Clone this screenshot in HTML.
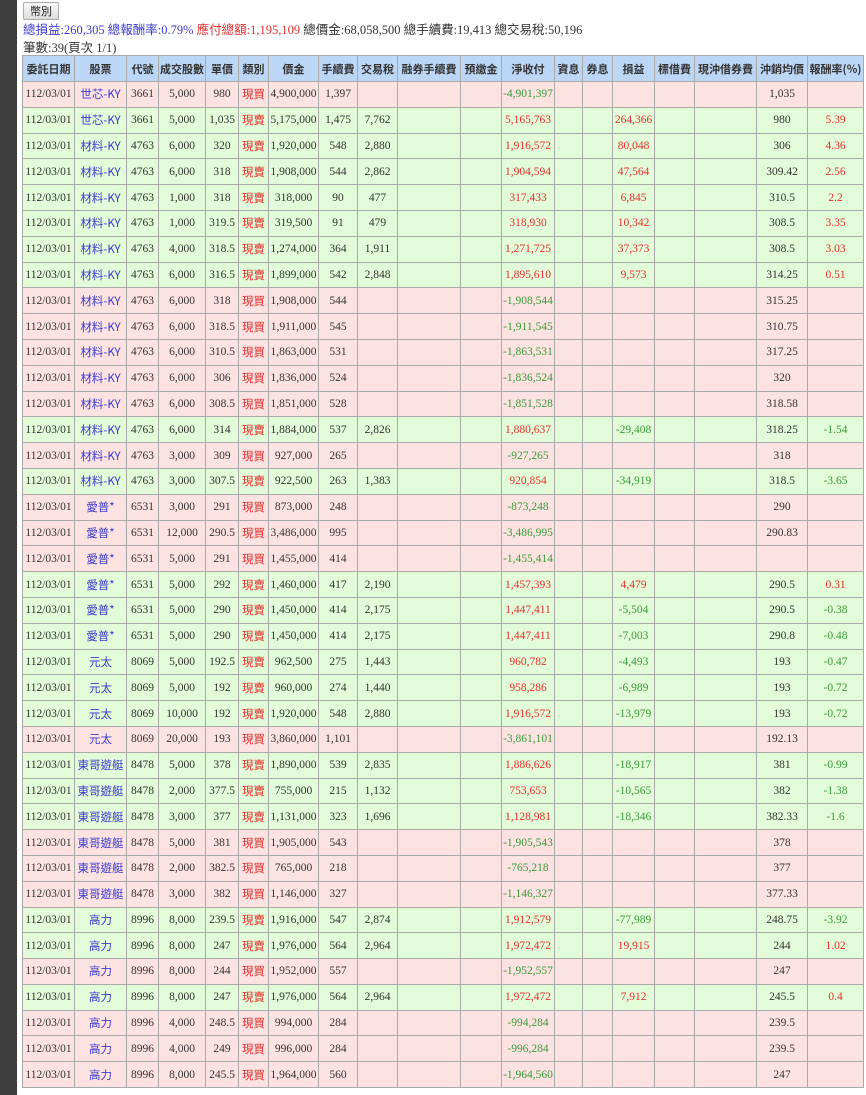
<!DOCTYPE html>
<html><head><meta charset="utf-8"><style>
body{margin:0;width:866px;height:1095px;overflow:hidden;background:#fff;font-family:"Liberation Serif","Noto Sans CJK TC",serif;font-size:12px;color:#333;position:relative}
.strip{position:absolute;left:0;top:0;width:17px;height:1095px;background:#3c3c3c}
.btn{position:absolute;left:23px;top:2px;width:34px;height:16px;border:1px solid #aaa;border-radius:2px;background:linear-gradient(#fafafa,#ddd);font:11px "Noto Sans CJK TC",sans-serif;text-align:center;line-height:16px;color:#222}
.l1{position:absolute;left:23px;top:19px;font-size:12.5px;white-space:nowrap}
.l2{position:absolute;left:23px;top:37px;font-size:12.5px;white-space:nowrap}
.b{color:#3a3ad0}.r{color:#e53030}
table{position:absolute;left:22px;top:55px;border-collapse:collapse;table-layout:fixed;width:841px}
td,th{border:1px solid #a9a9a9;padding:0;text-align:center;white-space:nowrap;overflow:hidden;font-size:11.5px}
th{background:#bcd6f5;height:25px;font:bold 11px "Noto Sans CJK TC",sans-serif;color:#333}
tr.p td{background:#fde2e2}tr.g td{background:#e2fbd8}
tr.p,tr.g{height:25.8px}
td:nth-child(2){color:#3a3ad0;font-family:"Noto Sans CJK TC",sans-serif}
td:nth-child(6){color:#e53030;font-family:"Noto Sans CJK TC",sans-serif}
.n{color:#3a9a3a}.u{color:#e53030}
.bot{position:absolute;left:22px;top:1089px;font:12px "Noto Sans CJK TC",sans-serif;color:#555}
</style></head><body>
<div class="strip"></div>
<div class="btn">幣別</div>
<div class="l1"><span class="b">總損益:260,305 總報酬率:0.79%</span> <span class="r">應付總額:1,195,109</span> 總價金:68,058,500 總手續費:19,413 總交易稅:50,196</div>
<div class="l2">筆數:39(頁次 1/1)</div>
<table>
<colgroup><col style="width:52px"><col style="width:52px"><col style="width:32px"><col style="width:47px"><col style="width:33px"><col style="width:30px"><col style="width:50px"><col style="width:39px"><col style="width:40px"><col style="width:63px"><col style="width:41px"><col style="width:53px"><col style="width:28px"><col style="width:30px"><col style="width:42px"><col style="width:40px"><col style="width:62px"><col style="width:51px"><col style="width:56px"></colgroup>
<tr><th>委託日期</th><th>股票</th><th>代號</th><th>成交股數</th><th>單價</th><th>類別</th><th>價金</th><th>手續費</th><th>交易稅</th><th>融券手續費</th><th>預繳金</th><th>淨收付</th><th>資息</th><th>券息</th><th>損益</th><th>標借費</th><th>現沖借券費</th><th>沖銷均價</th><th>報酬率(%)</th></tr>
<tr class="p"><td>112/03/01</td><td>世芯-KY</td><td>3661</td><td>5,000</td><td>980</td><td>現買</td><td>4,900,000</td><td>1,397</td><td></td><td></td><td></td><td class="n">-4,901,397</td><td></td><td></td><td></td><td></td><td></td><td>1,035</td><td></td></tr>
<tr class="g"><td>112/03/01</td><td>世芯-KY</td><td>3661</td><td>5,000</td><td>1,035</td><td>現賣</td><td>5,175,000</td><td>1,475</td><td>7,762</td><td></td><td></td><td class="u">5,165,763</td><td></td><td></td><td class="u">264,366</td><td></td><td></td><td>980</td><td class="u">5.39</td></tr>
<tr class="g"><td>112/03/01</td><td>材料-KY</td><td>4763</td><td>6,000</td><td>320</td><td>現賣</td><td>1,920,000</td><td>548</td><td>2,880</td><td></td><td></td><td class="u">1,916,572</td><td></td><td></td><td class="u">80,048</td><td></td><td></td><td>306</td><td class="u">4.36</td></tr>
<tr class="g"><td>112/03/01</td><td>材料-KY</td><td>4763</td><td>6,000</td><td>318</td><td>現賣</td><td>1,908,000</td><td>544</td><td>2,862</td><td></td><td></td><td class="u">1,904,594</td><td></td><td></td><td class="u">47,564</td><td></td><td></td><td>309.42</td><td class="u">2.56</td></tr>
<tr class="g"><td>112/03/01</td><td>材料-KY</td><td>4763</td><td>1,000</td><td>318</td><td>現賣</td><td>318,000</td><td>90</td><td>477</td><td></td><td></td><td class="u">317,433</td><td></td><td></td><td class="u">6,845</td><td></td><td></td><td>310.5</td><td class="u">2.2</td></tr>
<tr class="g"><td>112/03/01</td><td>材料-KY</td><td>4763</td><td>1,000</td><td>319.5</td><td>現賣</td><td>319,500</td><td>91</td><td>479</td><td></td><td></td><td class="u">318,930</td><td></td><td></td><td class="u">10,342</td><td></td><td></td><td>308.5</td><td class="u">3.35</td></tr>
<tr class="g"><td>112/03/01</td><td>材料-KY</td><td>4763</td><td>4,000</td><td>318.5</td><td>現賣</td><td>1,274,000</td><td>364</td><td>1,911</td><td></td><td></td><td class="u">1,271,725</td><td></td><td></td><td class="u">37,373</td><td></td><td></td><td>308.5</td><td class="u">3.03</td></tr>
<tr class="g"><td>112/03/01</td><td>材料-KY</td><td>4763</td><td>6,000</td><td>316.5</td><td>現賣</td><td>1,899,000</td><td>542</td><td>2,848</td><td></td><td></td><td class="u">1,895,610</td><td></td><td></td><td class="u">9,573</td><td></td><td></td><td>314.25</td><td class="u">0.51</td></tr>
<tr class="p"><td>112/03/01</td><td>材料-KY</td><td>4763</td><td>6,000</td><td>318</td><td>現買</td><td>1,908,000</td><td>544</td><td></td><td></td><td></td><td class="n">-1,908,544</td><td></td><td></td><td></td><td></td><td></td><td>315.25</td><td></td></tr>
<tr class="p"><td>112/03/01</td><td>材料-KY</td><td>4763</td><td>6,000</td><td>318.5</td><td>現買</td><td>1,911,000</td><td>545</td><td></td><td></td><td></td><td class="n">-1,911,545</td><td></td><td></td><td></td><td></td><td></td><td>310.75</td><td></td></tr>
<tr class="p"><td>112/03/01</td><td>材料-KY</td><td>4763</td><td>6,000</td><td>310.5</td><td>現買</td><td>1,863,000</td><td>531</td><td></td><td></td><td></td><td class="n">-1,863,531</td><td></td><td></td><td></td><td></td><td></td><td>317.25</td><td></td></tr>
<tr class="p"><td>112/03/01</td><td>材料-KY</td><td>4763</td><td>6,000</td><td>306</td><td>現買</td><td>1,836,000</td><td>524</td><td></td><td></td><td></td><td class="n">-1,836,524</td><td></td><td></td><td></td><td></td><td></td><td>320</td><td></td></tr>
<tr class="p"><td>112/03/01</td><td>材料-KY</td><td>4763</td><td>6,000</td><td>308.5</td><td>現買</td><td>1,851,000</td><td>528</td><td></td><td></td><td></td><td class="n">-1,851,528</td><td></td><td></td><td></td><td></td><td></td><td>318.58</td><td></td></tr>
<tr class="g"><td>112/03/01</td><td>材料-KY</td><td>4763</td><td>6,000</td><td>314</td><td>現賣</td><td>1,884,000</td><td>537</td><td>2,826</td><td></td><td></td><td class="u">1,880,637</td><td></td><td></td><td class="n">-29,408</td><td></td><td></td><td>318.25</td><td class="n">-1.54</td></tr>
<tr class="p"><td>112/03/01</td><td>材料-KY</td><td>4763</td><td>3,000</td><td>309</td><td>現買</td><td>927,000</td><td>265</td><td></td><td></td><td></td><td class="n">-927,265</td><td></td><td></td><td></td><td></td><td></td><td>318</td><td></td></tr>
<tr class="g"><td>112/03/01</td><td>材料-KY</td><td>4763</td><td>3,000</td><td>307.5</td><td>現賣</td><td>922,500</td><td>263</td><td>1,383</td><td></td><td></td><td class="u">920,854</td><td></td><td></td><td class="n">-34,919</td><td></td><td></td><td>318.5</td><td class="n">-3.65</td></tr>
<tr class="p"><td>112/03/01</td><td>愛普*</td><td>6531</td><td>3,000</td><td>291</td><td>現買</td><td>873,000</td><td>248</td><td></td><td></td><td></td><td class="n">-873,248</td><td></td><td></td><td></td><td></td><td></td><td>290</td><td></td></tr>
<tr class="p"><td>112/03/01</td><td>愛普*</td><td>6531</td><td>12,000</td><td>290.5</td><td>現買</td><td>3,486,000</td><td>995</td><td></td><td></td><td></td><td class="n">-3,486,995</td><td></td><td></td><td></td><td></td><td></td><td>290.83</td><td></td></tr>
<tr class="p"><td>112/03/01</td><td>愛普*</td><td>6531</td><td>5,000</td><td>291</td><td>現買</td><td>1,455,000</td><td>414</td><td></td><td></td><td></td><td class="n">-1,455,414</td><td></td><td></td><td></td><td></td><td></td><td></td><td></td></tr>
<tr class="g"><td>112/03/01</td><td>愛普*</td><td>6531</td><td>5,000</td><td>292</td><td>現賣</td><td>1,460,000</td><td>417</td><td>2,190</td><td></td><td></td><td class="u">1,457,393</td><td></td><td></td><td class="u">4,479</td><td></td><td></td><td>290.5</td><td class="u">0.31</td></tr>
<tr class="g"><td>112/03/01</td><td>愛普*</td><td>6531</td><td>5,000</td><td>290</td><td>現賣</td><td>1,450,000</td><td>414</td><td>2,175</td><td></td><td></td><td class="u">1,447,411</td><td></td><td></td><td class="n">-5,504</td><td></td><td></td><td>290.5</td><td class="n">-0.38</td></tr>
<tr class="g"><td>112/03/01</td><td>愛普*</td><td>6531</td><td>5,000</td><td>290</td><td>現賣</td><td>1,450,000</td><td>414</td><td>2,175</td><td></td><td></td><td class="u">1,447,411</td><td></td><td></td><td class="n">-7,003</td><td></td><td></td><td>290.8</td><td class="n">-0.48</td></tr>
<tr class="g"><td>112/03/01</td><td>元太</td><td>8069</td><td>5,000</td><td>192.5</td><td>現賣</td><td>962,500</td><td>275</td><td>1,443</td><td></td><td></td><td class="u">960,782</td><td></td><td></td><td class="n">-4,493</td><td></td><td></td><td>193</td><td class="n">-0.47</td></tr>
<tr class="g"><td>112/03/01</td><td>元太</td><td>8069</td><td>5,000</td><td>192</td><td>現賣</td><td>960,000</td><td>274</td><td>1,440</td><td></td><td></td><td class="u">958,286</td><td></td><td></td><td class="n">-6,989</td><td></td><td></td><td>193</td><td class="n">-0.72</td></tr>
<tr class="g"><td>112/03/01</td><td>元太</td><td>8069</td><td>10,000</td><td>192</td><td>現賣</td><td>1,920,000</td><td>548</td><td>2,880</td><td></td><td></td><td class="u">1,916,572</td><td></td><td></td><td class="n">-13,979</td><td></td><td></td><td>193</td><td class="n">-0.72</td></tr>
<tr class="p"><td>112/03/01</td><td>元太</td><td>8069</td><td>20,000</td><td>193</td><td>現買</td><td>3,860,000</td><td>1,101</td><td></td><td></td><td></td><td class="n">-3,861,101</td><td></td><td></td><td></td><td></td><td></td><td>192.13</td><td></td></tr>
<tr class="g"><td>112/03/01</td><td>東哥遊艇</td><td>8478</td><td>5,000</td><td>378</td><td>現賣</td><td>1,890,000</td><td>539</td><td>2,835</td><td></td><td></td><td class="u">1,886,626</td><td></td><td></td><td class="n">-18,917</td><td></td><td></td><td>381</td><td class="n">-0.99</td></tr>
<tr class="g"><td>112/03/01</td><td>東哥遊艇</td><td>8478</td><td>2,000</td><td>377.5</td><td>現賣</td><td>755,000</td><td>215</td><td>1,132</td><td></td><td></td><td class="u">753,653</td><td></td><td></td><td class="n">-10,565</td><td></td><td></td><td>382</td><td class="n">-1.38</td></tr>
<tr class="g"><td>112/03/01</td><td>東哥遊艇</td><td>8478</td><td>3,000</td><td>377</td><td>現賣</td><td>1,131,000</td><td>323</td><td>1,696</td><td></td><td></td><td class="u">1,128,981</td><td></td><td></td><td class="n">-18,346</td><td></td><td></td><td>382.33</td><td class="n">-1.6</td></tr>
<tr class="p"><td>112/03/01</td><td>東哥遊艇</td><td>8478</td><td>5,000</td><td>381</td><td>現買</td><td>1,905,000</td><td>543</td><td></td><td></td><td></td><td class="n">-1,905,543</td><td></td><td></td><td></td><td></td><td></td><td>378</td><td></td></tr>
<tr class="p"><td>112/03/01</td><td>東哥遊艇</td><td>8478</td><td>2,000</td><td>382.5</td><td>現買</td><td>765,000</td><td>218</td><td></td><td></td><td></td><td class="n">-765,218</td><td></td><td></td><td></td><td></td><td></td><td>377</td><td></td></tr>
<tr class="p"><td>112/03/01</td><td>東哥遊艇</td><td>8478</td><td>3,000</td><td>382</td><td>現買</td><td>1,146,000</td><td>327</td><td></td><td></td><td></td><td class="n">-1,146,327</td><td></td><td></td><td></td><td></td><td></td><td>377.33</td><td></td></tr>
<tr class="g"><td>112/03/01</td><td>高力</td><td>8996</td><td>8,000</td><td>239.5</td><td>現賣</td><td>1,916,000</td><td>547</td><td>2,874</td><td></td><td></td><td class="u">1,912,579</td><td></td><td></td><td class="n">-77,989</td><td></td><td></td><td>248.75</td><td class="n">-3.92</td></tr>
<tr class="g"><td>112/03/01</td><td>高力</td><td>8996</td><td>8,000</td><td>247</td><td>現賣</td><td>1,976,000</td><td>564</td><td>2,964</td><td></td><td></td><td class="u">1,972,472</td><td></td><td></td><td class="u">19,915</td><td></td><td></td><td>244</td><td class="u">1.02</td></tr>
<tr class="p"><td>112/03/01</td><td>高力</td><td>8996</td><td>8,000</td><td>244</td><td>現買</td><td>1,952,000</td><td>557</td><td></td><td></td><td></td><td class="n">-1,952,557</td><td></td><td></td><td></td><td></td><td></td><td>247</td><td></td></tr>
<tr class="g"><td>112/03/01</td><td>高力</td><td>8996</td><td>8,000</td><td>247</td><td>現賣</td><td>1,976,000</td><td>564</td><td>2,964</td><td></td><td></td><td class="u">1,972,472</td><td></td><td></td><td class="u">7,912</td><td></td><td></td><td>245.5</td><td class="u">0.4</td></tr>
<tr class="p"><td>112/03/01</td><td>高力</td><td>8996</td><td>4,000</td><td>248.5</td><td>現買</td><td>994,000</td><td>284</td><td></td><td></td><td></td><td class="n">-994,284</td><td></td><td></td><td></td><td></td><td></td><td>239.5</td><td></td></tr>
<tr class="p"><td>112/03/01</td><td>高力</td><td>8996</td><td>4,000</td><td>249</td><td>現買</td><td>996,000</td><td>284</td><td></td><td></td><td></td><td class="n">-996,284</td><td></td><td></td><td></td><td></td><td></td><td>239.5</td><td></td></tr>
<tr class="p"><td>112/03/01</td><td>高力</td><td>8996</td><td>8,000</td><td>245.5</td><td>現買</td><td>1,964,000</td><td>560</td><td></td><td></td><td></td><td class="n">-1,964,560</td><td></td><td></td><td></td><td></td><td></td><td>247</td><td></td></tr>
</table>
<div class="bot">   </div>
</body></html>
